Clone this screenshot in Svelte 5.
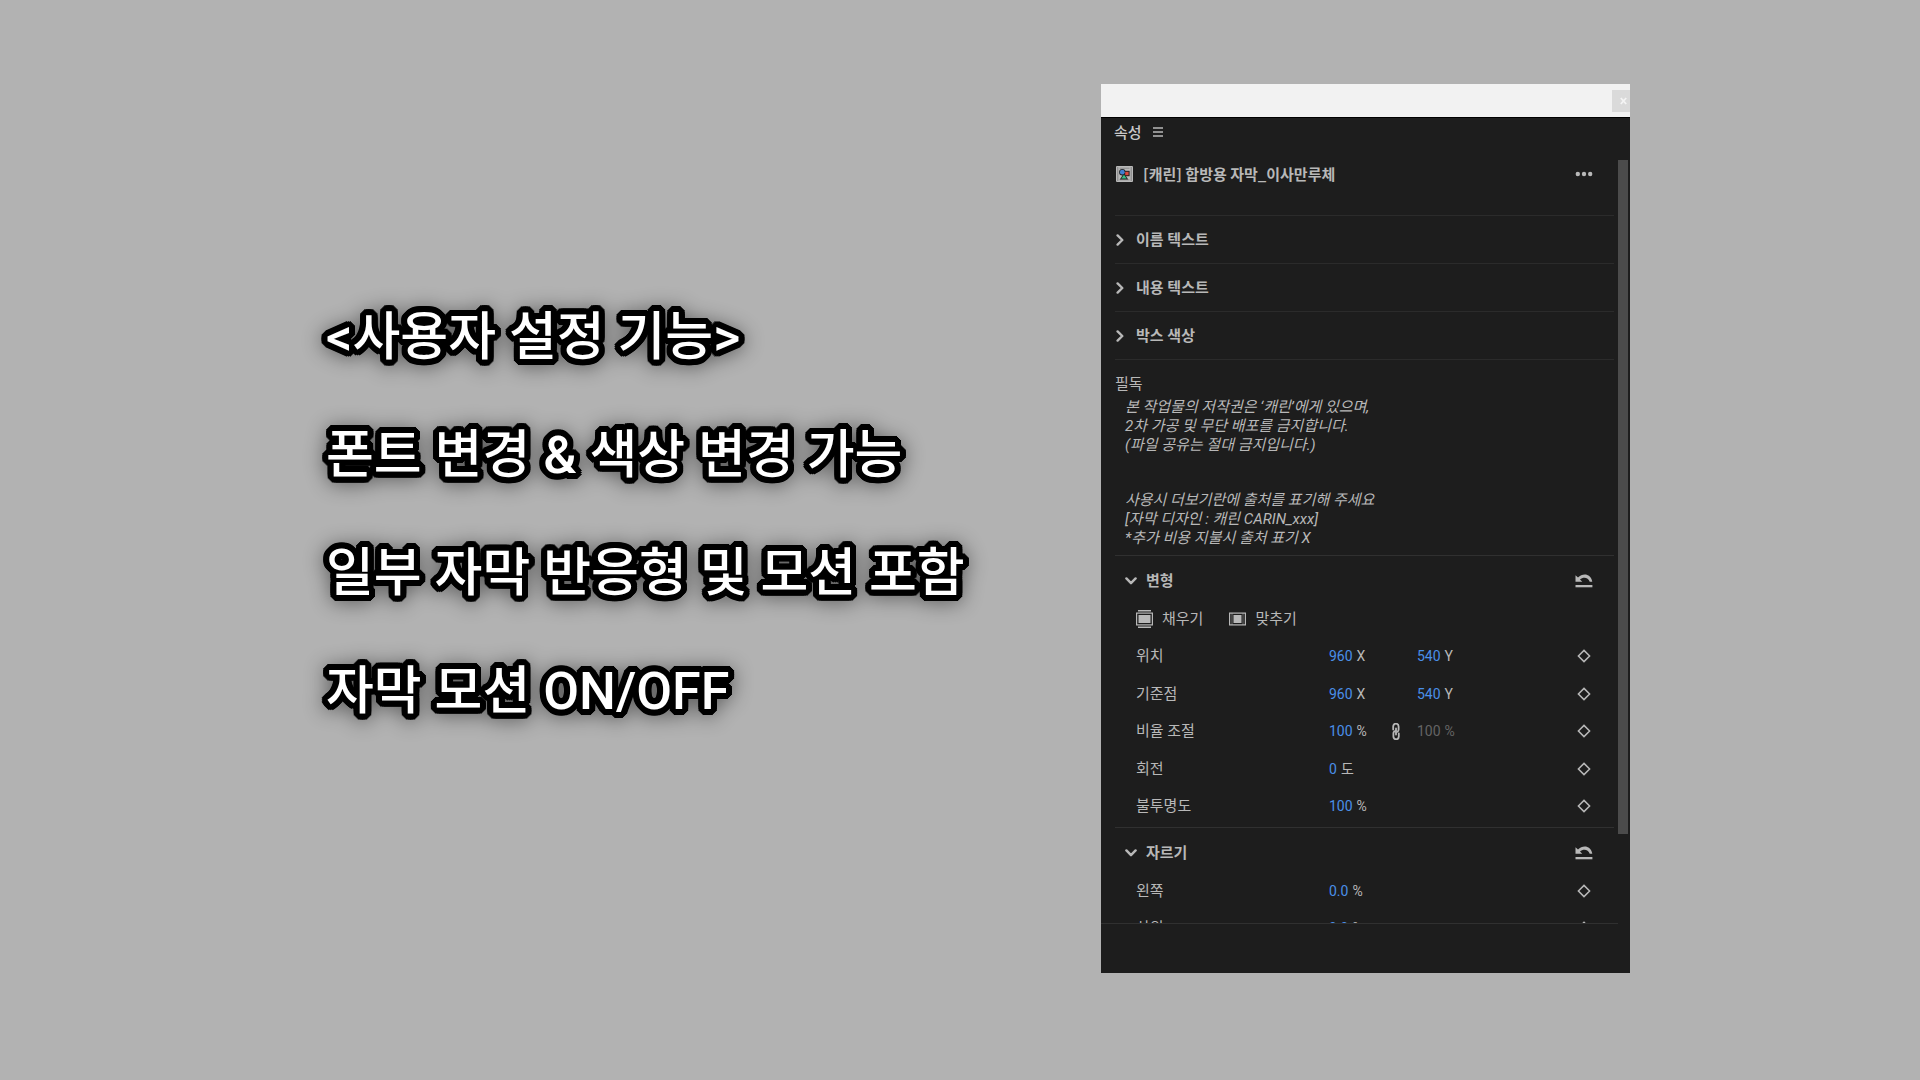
<script>
  const captions = [
    '<사용자 설정 기능>',
    '폰트 변경 & 색상 변경 가능',
    '일부 자막 반응형 및 모션 포함',
    '자막 모션 ON/OFF'
  ];

  const groups = ['이름 텍스트', '내용 텍스트', '박스 색상'];

  const notes = [
    ['본 작업물의 저작권은 ‘캐린’에게 있으며,', '2차 가공 및 무단 배포를 금지합니다.', '(파일 공유는 절대 금지입니다.)'],
    ['사용시 더보기란에 출처를 표기해 주세요', '[자막 디자인 : 캐린 CARIN_xxx]', '*추가 비용 지불시 출처 표기 X']
  ];

  const transform = [
    { label: '위치', a: ['960', 'X'], b: ['540', 'Y'] },
    { label: '기준점', a: ['960', 'X'], b: ['540', 'Y'] },
    { label: '비율 조절', a: ['100', '%'], b: ['100', '%'], linked: true },
    { label: '회전', a: ['0', '도'] },
    { label: '불투명도', a: ['100', '%'] }
  ];

  const crop = [
    { label: '왼쪽', a: ['0.0', '%'] },
    { label: '상위', a: ['0.0', '%'] }
  ];
</script>

{#snippet value(pair, disabled)}
  <span class="value" class:disabled>
    <button class="hot" {disabled}>{pair[0]}</button>
    <span>{pair[1]}</span>
  </span>
{/snippet}

{#snippet property(p)}
  <div class="prop">
    <span class="label">{p.label}</span>
    <div class="cell">
      {@render value(p.a, false)}
      {#if p.linked}
        <button class="link" aria-label="비율 고정">
          <svg width="8" height="17" viewBox="0 0 8 17" fill="none" stroke="currentColor" stroke-width="1.8" stroke-linecap="round">
            <path d="M1.2 6.6V3.4a2.7 2.7 0 0 1 5.4 0v3a2.6 2.6 0 0 1-2.6 2.7M4 5.4v1.8" />
            <path d="M6.8 10.4v3.2a2.7 2.7 0 0 1-5.4 0v-3A2.6 2.6 0 0 1 4 7.9M4 11.6V9.8" />
          </svg>
        </button>
      {/if}
    </div>
    <div class="cell">
      {#if p.b}{@render value(p.b, !!p.linked)}{/if}
    </div>
    <button class="tool" aria-label="키프레임 추가">
      <svg width="14" height="14" viewBox="0 0 14 14" fill="none" stroke="currentColor" stroke-width="1.5">
        <path d="M7 1.400 12.600 7 7 12.600 1.400 7Z" />
      </svg>
    </button>
  </div>
{/snippet}

{#snippet sectionHead(title)}
  <header class="section-head">
    <button class="toggle" aria-expanded="true">
      <svg width="12" height="8" viewBox="0 0 12 8" fill="none" stroke="currentColor" stroke-width="2.4" stroke-linecap="round" stroke-linejoin="round">
        <path d="M1.4 1.4 6 6.2l4.6-4.8" />
      </svg>
      {title}
    </button>
    <button class="tool" aria-label="재설정">
      <svg width="18" height="14" viewBox="0 0 18 14">
        <path d="M.5 1.200v6.600h6.800L5 5.600C7.800 2.800 13.200 2.900 14.700 7.800h2.600C15.800-.6 7.800-1.500 3 3.600Z" fill="currentColor" />
        <path d="M.5 11h16.900v2.300H.5z" fill="currentColor" />
      </svg>
    </button>
  </header>
{/snippet}

<main class="stage">
  <section class="captions">
    {#each captions as line}
      <p>{line}</p>
    {/each}
  </section>

  <section class="panel" aria-label="속성">
    <div class="titlebar">
      <button class="close" aria-label="닫기">
        <svg width="7" height="8" viewBox="0 0 7 8" stroke="currentColor" stroke-width="1.8">
          <path d="M.8 1l5.400 6M6.200 1l-5.400 6" />
        </svg>
      </button>
    </div>

    <div class="tab">
      <h1>속성</h1>
      <button class="menu" aria-label="패널 메뉴">
        <svg width="10" height="10" viewBox="0 0 10 10" stroke="currentColor" stroke-width="1.300">
          <path d="M0 1h10M0 5h10M0 9h10" />
        </svg>
      </button>
    </div>

    <div class="body">
      <div class="scroll">
        <div class="clip">
          <svg class="clip-icon" width="17" height="16" viewBox="0 0 17 16">
            <rect width="17" height="16" rx="1" fill="#b9b9b9" />
            <path d="M1.800 1.500v13M15.200 1.500v13" stroke="#4a4a4a" stroke-width="1" stroke-dasharray="1 1" />
            <path d="M3.500 2.200h10M3.500 13.800h10" stroke="#6a6a6a" stroke-width=".6" />
            <circle cx="6.300" cy="6.200" r="3.200" fill="#222" />
            <rect x="8" y="4.800" width="5.600" height="5.400" fill="#222" />
            <path d="M8 7l4.200 6.400H3.800z" fill="#222" />
            <circle cx="6.300" cy="6.200" r="2.400" fill="#3f7fd0" />
            <rect x="9.200" y="5.800" width="3.400" height="3.400" fill="#d8483e" />
            <path d="M8 8.800l2.600 3.800H5.400z" fill="#35c285" />
          </svg>
          <h2>[캐린] 합방용 자막_이사만루체</h2>
          <button class="tool" aria-label="더 보기">
            <svg width="18" height="6" viewBox="0 0 18 6" fill="currentColor">
              <circle cx="2.800" cy="3" r="2.200" /><circle cx="9" cy="3" r="2.200" /><circle cx="15.200" cy="3" r="2.200" />
            </svg>
          </button>
        </div>

        {#each groups as group}
          <button class="group" aria-expanded="false">
            <svg width="8" height="12" viewBox="0 0 8 12" fill="none" stroke="currentColor" stroke-width="2.400" stroke-linecap="round" stroke-linejoin="round">
              <path d="M1.600 1.400 6.300 6l-4.700 4.600" />
            </svg>
            {group}
          </button>
        {/each}

        <section class="notice">
          <h3>필독</h3>
          {#each notes as paragraph}
            <p>{#each paragraph as line}<span>{line}</span>{/each}</p>
          {/each}
        </section>

        <section class="section">
          {@render sectionHead('변형')}
          <div class="rows">
            <div class="fits">
              <button>
                <svg width="17" height="18" viewBox="0 0 17 18">
                  <path d="M2 .8h13M2 17.200h13" stroke="currentColor" stroke-width="1.600" />
                  <rect x=".6" y="3.100" width="15.800" height="11.800" fill="none" stroke="currentColor" stroke-width="1.200" />
                  <rect x="2.500" y="5" width="12" height="8" fill="currentColor" />
                </svg>
                채우기
              </button>
              <button>
                <svg width="17" height="18" viewBox="0 0 17 18">
                  <rect x=".6" y="3.100" width="15.800" height="11.800" fill="none" stroke="currentColor" stroke-width="1.200" />
                  <path d="M3 3v12M14 3v12" stroke="currentColor" stroke-width="1" opacity=".5" />
                  <rect x="4.500" y="5" width="8" height="8" fill="currentColor" />
                </svg>
                맞추기
              </button>
            </div>
            {#each transform as p}{@render property(p)}{/each}
          </div>
        </section>

        <section class="section">
          {@render sectionHead('자르기')}
          <div class="rows short">
            {#each crop as p}{@render property(p)}{/each}
          </div>
        </section>
      </div>
      <div class="track"><div class="thumb"></div></div>
    </div>
  </section>
</main>

<style>
  :global(body) {
    background: #b2b2b2;
  }

  * {
    box-sizing: border-box;
  }

  h1, h2, h3, p {
    margin: 0;
    font-size: inherit;
  }

  button {
    display: inline-flex;
    align-items: center;
    padding: 0;
    border: 0;
    background: none;
    color: inherit;
    font: inherit;
    cursor: pointer;
  }

  svg {
    display: block;
    flex: none;
  }

  .stage {
    display: grid;
    grid-template-columns: minmax(0, 775fr) minmax(0, 529fr);
    align-items: start;
    min-height: 100vh;
    padding: 84px 290px 84px 326px;
    font-family: Roboto, 'Noto Sans CJK KR', sans-serif;
  }

  .captions {
    padding-top: 195px;
  }

  .captions p {
    color: #fff;
    font-size: 52px;
    font-weight: 500;
    line-height: 118px;
    white-space: nowrap;
    text-shadow:
      6px 0 #000, 6px 2px #000, 5px 3px #000, 4px 4px #000, 3px 5px #000, 2px 6px #000,
      0 6px #000, -2px 6px #000, -3px 5px #000, -4px 4px #000, -5px 3px #000, -6px 2px #000,
      -6px 0 #000, -6px -2px #000, -5px -3px #000, -4px -4px #000, -3px -5px #000, -2px -6px #000,
      0 -6px #000, 2px -6px #000, 3px -5px #000, 4px -4px #000, 5px -3px #000, 6px -2px #000,
      3px 0 #000, -3px 0 #000, 0 3px #000, 0 -3px #000;
    filter: drop-shadow(0 2px 10px rgb(0 0 0 / 45%));
  }

  .panel {
    background: #1d1d1d;
    color: #b8b8b8;
    font-size: 15px;
    line-height: 20px;
  }

  .titlebar {
    display: flex;
    justify-content: flex-end;
    height: 34px;
    padding-top: 6px;
    background: #f2f2f2;
    border-bottom: 1px solid #000;
  }

  .close {
    justify-content: center;
    width: 18px;
    height: 22px;
    padding-left: 4px;
    background: #dadada;
    color: #f4f4f4;
  }

  .tab {
    display: flex;
    align-items: center;
    gap: 11px;
    height: 42px;
    padding: 0 13px 14px;
  }

  .tab h1 {
    padding-top: 2px;
    font-weight: 500;
    color: #c8c8c8;
  }

  .body {
    display: flex;
    padding: 0 2px 49px 0;
  }

  .scroll {
    flex: 1;
    height: 764px;
    padding: 0 4px 0 14px;
    overflow: hidden;
    border-bottom: 1px solid #303030;
  }

  .track {
    width: 10px;
  }

  .thumb {
    height: 674px;
    background: #4b4b4b;
  }

  .clip {
    display: flex;
    align-items: center;
    height: 55px;
    padding: 0 22px 27px 1px;
  }

  .clip h2 {
    flex: 1;
    padding-left: 10px;
    font-family: 'Noto Sans CJK KR', sans-serif;
    font-weight: 700;
  }

  .group {
    display: flex;
    gap: 12px;
    width: 100%;
    height: 48px;
    padding-left: 1px;
    border-top: 1px solid #2b2b2b;
    font-weight: 700;
  }

  .notice {
    height: 196px;
    padding-top: 12px;
    border-top: 1px solid #2b2b2b;
  }

  .notice h3 {
    padding-bottom: 2px;
    font-weight: 400;
    line-height: 24px;
  }

  .notice p {
    margin-bottom: 36px;
    padding-left: 10px;
    font-style: italic;
    line-height: 19px;
  }

  .notice span {
    display: block;
  }

  .section {
    padding: 6px 0 2px;
    border-top: 1px solid #303030;
  }

  .section-head {
    display: flex;
    justify-content: space-between;
    align-items: center;
    height: 37px;
    padding: 0 22px 0 10px;
  }

  .toggle {
    gap: 9px;
    font-weight: 700;
  }

  .tool {
    justify-content: center;
    width: 17px;
  }

  .rows {
    display: grid;
    grid-auto-rows: 1fr;
    min-height: 226px;
    padding: 1px 22px 0 21px;
  }

  .short {
    min-height: 76px;
  }

  .fits {
    display: flex;
    align-items: center;
    gap: 26px;
  }

  .fits button {
    gap: 9px;
  }

  .prop {
    display: grid;
    grid-template-columns: 193px 88px minmax(0, 1fr) auto;
    align-items: center;
  }

  .cell {
    display: flex;
    align-items: center;
    font-size: 14px;
  }

  .value {
    display: flex;
    gap: 4px;
    white-space: nowrap;
  }

  .hot {
    color: #4a8fe8;
    cursor: ew-resize;
  }

  .link {
    margin: 0 17px 0 auto;
  }

  .disabled,
  .disabled .hot {
    color: #646464;
  }
</style>
